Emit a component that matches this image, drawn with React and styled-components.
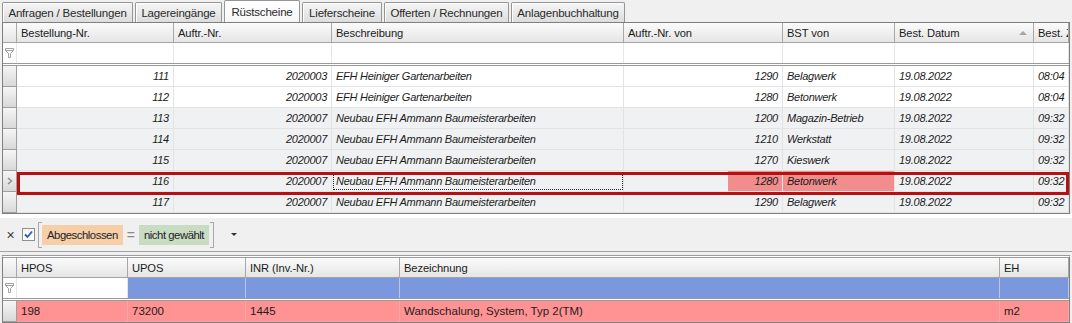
import React from "react";
import styled, { createGlobalStyle } from "styled-components";

const GlobalStyle = createGlobalStyle`
  html, body {
    margin: 0;
    padding: 0;
  }
  body {
    background: #f0f0f0;
    font-family: "Liberation Sans", Arial, sans-serif;
    font-size: 11px;
    color: #1e1e1e;
  }
`;

const Page = styled.div`
  width: 1072px;
  height: 323px;
  overflow: hidden;
  background: #f0f0f0;
`;

const TabStrip = styled.div`
  display: flex;
  align-items: flex-end;
  gap: 2px;
  height: 22px;
  padding-left: 2px;
`;

const Tab = styled.div`
  box-sizing: border-box;
  width: ${(p) => p.$w}px;
  height: ${(p) => (p.$active ? 22 : 20)}px;
  display: flex;
  align-items: center;
  justify-content: center;
  border: 1px solid #959595;
  border-bottom: none;
  border-radius: 2px 2px 0 0;
  background: ${(p) =>
    p.$active ? "linear-gradient(#ffffff, #f6f6f6)" : "linear-gradient(#f5f5f5, #dddddd)"};
  box-shadow: inset 1px 1px 0 #ffffff;
  font-size: 11.5px;
  letter-spacing: -0.2px;
  color: #2a2a2a;
  padding-top: ${(p) => (p.$active ? 0 : 1)}px;
`;

const GridFrame = styled.div`
  margin: ${(p) => (p.$double ? "3px 2px 0" : "0 2px")};
  border: 1px solid #7f7f7f;
  border-top: ${(p) => (p.$double ? "3px double #9a9a9a" : "1px solid #7f7f7f")};
  background: #ffffff;
`;

const Row = styled.div`
  display: grid;
  grid-template-columns: ${(p) => p.$cols};
  position: relative;
`;

const HeaderRow = styled(Row)`
  height: ${(p) => p.$h || 20}px;
  box-sizing: border-box;
  border-bottom: 1px solid #a3a3a3;
`;

const HeaderCell = styled.div`
  display: flex;
  align-items: center;
  justify-content: space-between;
  padding: 0 4px;
  overflow: hidden;
  white-space: nowrap;
  background: linear-gradient(#fbfbfb, #e5e5e5);
  border-right: 1px solid #a8a8a8;
  color: #1b1b1b;
  font-size: 11.2px;
  letter-spacing: -0.1px;
`;

const SortArrow = styled.span`
  width: 0;
  height: 0;
  border-left: 4px solid transparent;
  border-right: 4px solid transparent;
  border-bottom: 4px solid #a6a6a6;
  margin-right: 2px;
`;

const FilterRow = styled(Row)`
  height: 23px;
  box-sizing: border-box;
  border-bottom: 3px double #9a9a9a;
`;

const FilterCell = styled.div`
  display: flex;
  align-items: center;
  justify-content: center;
  background: ${(p) => p.$bg || "#ffffff"};
  border-right: 1px solid ${(p) => (p.$bg ? "#b9c6ea" : "#e6e6e6")};
`;

const DataRow = styled(Row)`
  height: 21px;
  box-sizing: border-box;
  background: ${(p) => p.$bg};
  border-bottom: 1px solid ${(p) => p.$line || "#e3e3e3"};
`;

const Indicator = styled.div`
  display: flex;
  align-items: center;
  justify-content: center;
  background: linear-gradient(#f6f6f6, #d8d8d8);
  border-right: 1px solid #9e9e9e;
  margin-bottom: -1px;
  border-bottom: 1px solid #9e9e9e;
`;

const Cell = styled.div`
  display: flex;
  align-items: center;
  justify-content: ${(p) => (p.$right ? "flex-end" : "flex-start")};
  padding: 0 4px;
  overflow: hidden;
  white-space: nowrap;
  font-style: ${(p) => (p.$plain ? "normal" : "italic")};
  font-size: ${(p) => (p.$plain ? "11.5px" : "11px")};
  letter-spacing: ${(p) => (p.$plain ? "0" : "-0.25px")};
  color: #1c1c1c;
  background: ${(p) => p.$bg || "transparent"};
  border-right: 1px solid ${(p) => p.$line || "#e3e3e3"};
  outline: ${(p) => (p.$focus ? "1px dotted #222" : "none")};
  outline-offset: -2px;
`;

const Selection = styled.span`
  position: absolute;
  left: 14px;
  right: 0;
  top: 1px;
  bottom: -4px;
  border: 3px solid #b80f10;
  pointer-events: none;
  z-index: 2;
`;

const FilterPanel = styled.div`
  display: flex;
  align-items: center;
  height: 33px;
  border-top: 4px solid #ffffff;
  border-bottom: 1px solid #a3a3a3;
  padding-left: 6px;
`;

const CloseMark = styled.span`
  width: 9px;
  text-align: center;
  font-size: 14px;
  color: #3a3a3a;
  line-height: 1;
`;

const CheckBox = styled.span`
  width: 13px;
  height: 13px;
  box-sizing: border-box;
  margin-left: 7px;
  border: 1px solid #8e8f8f;
  background: linear-gradient(#f4f4f4, #ffffff);
  display: flex;
  align-items: center;
  justify-content: center;
`;

const Bracket = styled.span`
  width: 4px;
  height: 26px;
  box-sizing: border-box;
  border: 1px solid #a8a8a8;
  border-right: ${(p) => (p.$right ? "1px solid #a8a8a8" : "none")};
  border-left: ${(p) => (p.$right ? "none" : "1px solid #a8a8a8")};
  margin-left: ${(p) => (p.$right ? 1 : 3)}px;
`;

const Chip = styled.span`
  height: 20px;
  display: flex;
  align-items: center;
  padding: 0 5px;
  background: ${(p) => p.$bg};
  color: #222;
  font-size: 11.3px;
  letter-spacing: -0.45px;
`;

const Equals = styled.span`
  margin: 0 4px;
  color: #8a8a8a;
  font-size: 14px;
`;

const DropArrow = styled.span`
  margin-left: 17px;
  width: 0;
  height: 0;
  border-left: 3px solid transparent;
  border-right: 3px solid transparent;
  border-top: 3px solid #333;
`;

const Funnel = () => (
  <svg width="9" height="10" viewBox="0 0 9 10">
    <path d="M0.5 0.5H8.5V2.5L5.5 5.5V9.5H3.5V5.5L0.5 2.5Z" fill="none" stroke="#a2a2a2" />
    <path d="M0.5 2.5H8.5" stroke="#a2a2a2" />
  </svg>
);

const Chevron = () => (
  <svg width="6" height="8" viewBox="0 0 6 8">
    <polyline points="1,1 4.5,4 1,7" fill="none" stroke="#8c8c8c" strokeWidth="1.4" />
  </svg>
);

const Check = () => (
  <svg width="9" height="9" viewBox="0 0 9 9">
    <polyline points="1,4.5 3.5,7 8,1.5" fill="none" stroke="#2d5bb8" strokeWidth="1.8" />
  </svg>
);

const tabs = [
  { label: "Anfragen / Bestellungen", w: 131 },
  { label: "Lagereingänge", w: 87 },
  { label: "Rüstscheine", w: 76, active: true },
  { label: "Lieferscheine", w: 80 },
  { label: "Offerten / Rechnungen", w: 125 },
  { label: "Anlagenbuchhaltung", w: 114 },
];

const topCols = "14px 157px 158px 292px 159px 112px 139px 1fr";
const topHeads = ["Bestellung-Nr.", "Auftr.-Nr.", "Beschreibung", "Auftr.-Nr. von", "BST von", "Best. Datum", "Best. Zeit"];

const ammann = "Neubau EFH Ammann Baumeisterarbeiten";
const orders = [
  { nr: "111", auftr: "2020003", text: "EFH Heiniger Gartenarbeiten", von: "1290", bst: "Belagwerk", time: "08:04" },
  { nr: "112", auftr: "2020003", text: "EFH Heiniger Gartenarbeiten", von: "1280", bst: "Betonwerk", time: "08:04" },
  { nr: "113", auftr: "2020007", text: ammann, von: "1200", bst: "Magazin-Betrieb", time: "09:32" },
  { nr: "114", auftr: "2020007", text: ammann, von: "1210", bst: "Werkstatt", time: "09:32" },
  { nr: "115", auftr: "2020007", text: ammann, von: "1270", bst: "Kieswerk", time: "09:32" },
  { nr: "116", auftr: "2020007", text: ammann, von: "1280", bst: "Betonwerk", time: "09:32", selected: true },
  { nr: "117", auftr: "2020007", text: ammann, von: "1290", bst: "Belagwerk", time: "09:32" },
];

const pink = "#f18d8d";
const partialPink = `linear-gradient(to right, transparent 104px, ${pink} 104px)`;

const bottomCols = "14px 111px 118px 154px 600px 1fr";
const bottomHeads = ["HPOS", "UPOS", "INR (Inv.-Nr.)", "Bezeichnung", "EH"];
const positions = [{ hpos: "198", upos: "73200", inr: "1445", bez: "Wandschalung, System, Typ 2(TM)", eh: "m2" }];

export default function App() {
  return (
    <Page>
      <GlobalStyle />
      <TabStrip>
        {tabs.map((t) => (
          <Tab key={t.label} $w={t.w} $active={t.active}>
            {t.label}
          </Tab>
        ))}
      </TabStrip>

      <GridFrame>
        <HeaderRow $cols={topCols}>
          <HeaderCell />
          {topHeads.map((h) => (
            <HeaderCell key={h}>
              {h}
              {h === "Best. Datum" && <SortArrow />}
            </HeaderCell>
          ))}
        </HeaderRow>
        <FilterRow $cols={topCols}>
          <FilterCell>
            <Funnel />
          </FilterCell>
          {topHeads.map((h) => (
            <FilterCell key={h} />
          ))}
        </FilterRow>
        {orders.map((o, i) => (
          <DataRow key={o.nr} $cols={topCols} $bg={i < 2 ? "#ffffff" : "#f0f1f3"}>
            <Indicator>{o.selected && <Chevron />}</Indicator>
            <Cell $right>{o.nr}</Cell>
            <Cell $right>{o.auftr}</Cell>
            <Cell $focus={o.selected}>{o.text}</Cell>
            <Cell $right $bg={o.selected ? partialPink : undefined}>{o.von}</Cell>
            <Cell $bg={o.selected ? pink : undefined}>{o.bst}</Cell>
            <Cell>19.08.2022</Cell>
            <Cell>{o.time}</Cell>
            {o.selected && <Selection />}
          </DataRow>
        ))}
      </GridFrame>

      <FilterPanel>
        <CloseMark>×</CloseMark>
        <CheckBox>
          <Check />
        </CheckBox>
        <Bracket />
        <Chip $bg="#f6cfa9">Abgeschlossen</Chip>
        <Equals>=</Equals>
        <Chip $bg="#c8dcc4">nicht gewählt</Chip>
        <Bracket $right />
        <DropArrow />
      </FilterPanel>

      <GridFrame $double>
        <HeaderRow $cols={bottomCols}>
          <HeaderCell />
          {bottomHeads.map((h) => (
            <HeaderCell key={h}>{h}</HeaderCell>
          ))}
        </HeaderRow>
        <FilterRow $cols={bottomCols}>
          <FilterCell>
            <Funnel />
          </FilterCell>
          {bottomHeads.map((h, i) => (
            <FilterCell key={h} $bg={i > 0 ? "#7b97dd" : undefined} />
          ))}
        </FilterRow>
        {positions.map((p) => (
          <DataRow key={p.hpos} $cols={bottomCols} $bg="#ff9393" $line="#f3a3a3">
            <Indicator />
            <Cell $plain $line="#f7a9a9">{p.hpos}</Cell>
            <Cell $plain $line="#f7a9a9">{p.upos}</Cell>
            <Cell $plain $line="#f7a9a9">{p.inr}</Cell>
            <Cell $plain $line="#f7a9a9">{p.bez}</Cell>
            <Cell $plain $line="#f7a9a9">{p.eh}</Cell>
          </DataRow>
        ))}
      </GridFrame>
    </Page>
  );
}
